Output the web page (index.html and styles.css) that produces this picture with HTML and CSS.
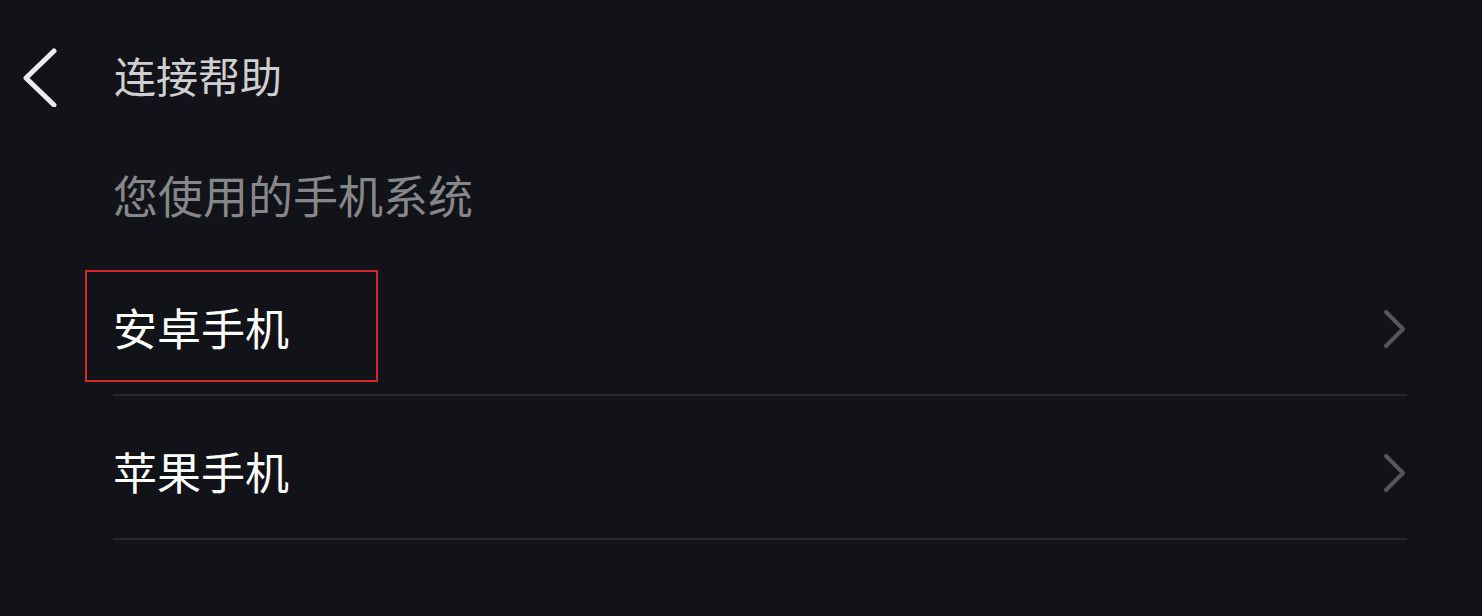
FILE: index.html
```html
<!DOCTYPE html>
<html lang="zh-CN">

<head>
    <meta charset="UTF-8">
    <title>连接帮助</title>
    <link rel="stylesheet" href="styles.css">
</head>

<body>
    <header class="top-bar">
        <div class="back-btn">
            <svg xmlns="http://www.w3.org/2000/svg" viewBox="0 0 40 60">
                <polyline points="32,4 4,31 32,58" />
            </svg>
        </div>
        <h1 class="title">连接帮助</h1>
    </header>

    <main class="content">
        <p class="section-label">您使用的手机系统</p>

        <ul class="option-list">
            <li class="option">
                <span class="option-name">安卓手机</span>
                <svg class="chevron" xmlns="http://www.w3.org/2000/svg" viewBox="0 0 24 40">
                    <polyline points="3,3 20,20 3,37" />
                </svg>
                <!-- 标注框 -->
                <div class="highlight"></div>
            </li>
            <li class="option">
                <span class="option-name">苹果手机</span>
                <svg class="chevron" xmlns="http://www.w3.org/2000/svg" viewBox="0 0 24 40">
                    <polyline points="3,3 20,20 3,37" />
                </svg>
            </li>
        </ul>
    </main>
</body>

</html>
```

FILE: styles.css
```css
body {
    margin: 0;
    background: #121318;
    font-family: "Noto Sans CJK SC", "Noto Sans", sans-serif;
    height: 100vh;
    overflow: hidden;
}

.top-bar {
    display: flex;
    align-items: center;
    height: 154px;
}

.back-btn {
    width: 114px;
    height: 154px;
    display: flex;
    align-items: center;
    padding-left: 22px;
    box-sizing: border-box;
}

.back-btn svg {
    width: 40px;
    height: 60px;
    fill: none;
    stroke: #ececec;
    stroke-width: 5px;
    stroke-linecap: round;
    stroke-linejoin: round;
}

.title {
    margin: 0 0 4px;
    font-size: 42px;
    font-weight: normal;
    line-height: 44px;
    color: #cfcfd1;
}

.content {
    padding: 0 75px 0 113px;
}

.section-label {
    margin: 19px 0 35px;
    font-size: 45px;
    line-height: 44px;
    color: #86878a;
}

.option-list {
    list-style: none;
    margin: 0;
    padding: 0;
}

.option {
    position: relative;
    display: flex;
    align-items: center;
    justify-content: space-between;
    padding: 53px 0 45px;
    border-bottom: 2px solid #27282d;
}

.option-name {
    font-size: 44px;
    line-height: 44px;
    color: #ffffff;
}

.chevron {
    width: 24px;
    height: 40px;
    margin-top: 4px;
    fill: none;
    stroke: #56575b;
    stroke-width: 4px;
    stroke-linecap: round;
    stroke-linejoin: round;
}

/* 红色标注框 */
.highlight {
    position: absolute;
    top: 18px;
    left: -28px;
    width: 293px;
    height: 112px;
    box-sizing: border-box;
    border: 2px solid #d3272c;
}
```
